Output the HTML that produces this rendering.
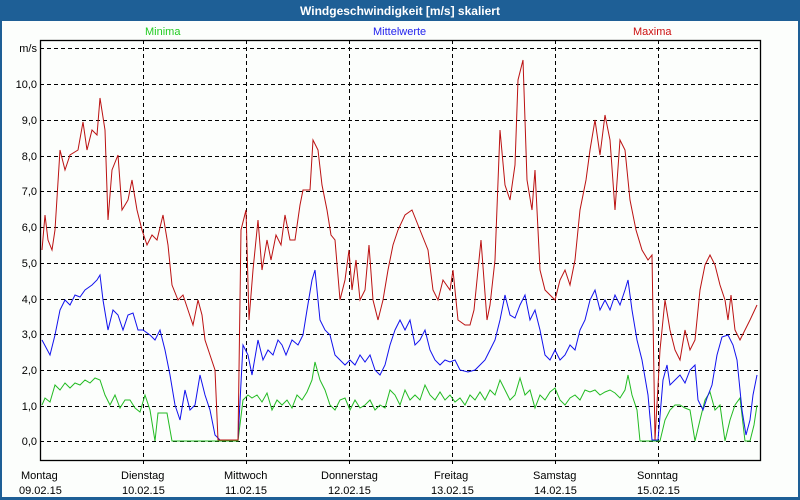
<!DOCTYPE html>
<html><head><meta charset="utf-8"><style>
body{margin:0;width:800px;height:500px;overflow:hidden;background:#fdfefd;font-family:"Liberation Sans",sans-serif;}
</style></head><body>
<svg width="800" height="500" xmlns="http://www.w3.org/2000/svg" style="display:block">
<rect x="0" y="0" width="800" height="500" fill="#1e5f96"/>
<rect x="2" y="21" width="796" height="476" fill="#fcfefc"/>
<text x="400" y="15" text-anchor="middle" font-size="12" font-weight="bold" fill="#fff" font-family="Liberation Sans, sans-serif">Windgeschwindigkeit [m/s] skaliert</text>
<g font-family="Liberation Sans, sans-serif" font-size="11">
<text x="145" y="35" fill="#22cc22">Minima</text>
<text x="373" y="35" fill="#2222ee">Mittelwerte</text>
<text x="633" y="35" fill="#cc1111">Maxima</text>
</g>
<g stroke="#000" stroke-dasharray="4,3" stroke-width="1">
<line x1="40" y1="48.5" x2="760" y2="48.5"/>
<line x1="40" y1="84.5" x2="760" y2="84.5"/>
<line x1="40" y1="120.5" x2="760" y2="120.5"/>
<line x1="40" y1="156.5" x2="760" y2="156.5"/>
<line x1="40" y1="191.5" x2="760" y2="191.5"/>
<line x1="40" y1="227.5" x2="760" y2="227.5"/>
<line x1="40" y1="263.5" x2="760" y2="263.5"/>
<line x1="40" y1="299.5" x2="760" y2="299.5"/>
<line x1="40" y1="334.5" x2="760" y2="334.5"/>
<line x1="40" y1="370.5" x2="760" y2="370.5"/>
<line x1="40" y1="406.5" x2="760" y2="406.5"/>
<line x1="40" y1="441.5" x2="760" y2="441.5"/>
<line x1="143.5" y1="40" x2="143.5" y2="466"/>
<line x1="246.5" y1="40" x2="246.5" y2="466"/>
<line x1="349.5" y1="40" x2="349.5" y2="466"/>
<line x1="452.5" y1="40" x2="452.5" y2="466"/>
<line x1="555.5" y1="40" x2="555.5" y2="466"/>
<line x1="658.5" y1="40" x2="658.5" y2="466"/>
</g>
<g font-family="Liberation Sans, sans-serif" font-size="11" fill="#000" text-anchor="end">
<text x="37" y="52">m/s</text><text x="37" y="88">10,0</text><text x="37" y="124">9,0</text>
<text x="37" y="160">8,0</text><text x="37" y="195">7,0</text><text x="37" y="231">6,0</text>
<text x="37" y="267">5,0</text><text x="37" y="303">4,0</text><text x="37" y="338">3,0</text>
<text x="37" y="374">2,0</text><text x="37" y="410">1,0</text><text x="37" y="445">0,0</text>
</g>
<g font-family="Liberation Sans, sans-serif" font-size="11" fill="#000">
<text x="21" y="479">Montag</text><text x="19" y="494">09.02.15</text>
<text x="121" y="479">Dienstag</text><text x="122" y="494">10.02.15</text>
<text x="224" y="479">Mittwoch</text><text x="225" y="494">11.02.15</text>
<text x="321" y="479">Donnerstag</text><text x="328" y="494">12.02.15</text>
<text x="434" y="479">Freitag</text><text x="431" y="494">13.02.15</text>
<text x="533" y="479">Samstag</text><text x="534" y="494">14.02.15</text>
<text x="637" y="479">Sonntag</text><text x="637" y="494">15.02.15</text>
</g>
<polyline fill="none" stroke="#22bb22" stroke-width="1" points="42,405 45,398 50,402 55,385 60,390 65,383 70,388 75,383 80,385 85,380 90,383 95,378 100,380 105,395 110,405 115,395 120,408 125,400 130,400 135,408 140,412 145,395 150,410 155,441 158,413 163,413 167,413 172,441 180,441 215,441 238,441 243,400 248,395 252,398 257,395 262,402 267,393 272,410 277,400 282,405 287,400 292,408 297,395 302,400 307,392 312,380 315,362 320,380 325,390 330,405 335,410 340,400 345,398 350,410 355,400 360,408 365,405 370,400 375,410 380,405 385,408 390,390 395,395 400,405 405,390 410,400 415,395 420,400 425,385 430,395 435,400 440,392 445,400 450,395 455,402 460,398 465,405 470,395 475,400 480,392 485,400 490,390 495,395 500,380 505,390 510,400 515,395 520,378 525,395 530,390 535,408 540,395 545,400 550,392 555,388 560,400 565,405 570,398 575,395 580,400 585,390 590,392 595,390 600,395 605,392 610,390 615,393 620,398 625,390 628,375 632,395 637,410 640,441 660,441 665,420 670,410 675,405 680,405 685,408 690,410 695,441 700,420 705,400 710,392 715,410 720,405 725,441 730,420 735,405 740,398 745,441 750,441 754,425 757,405"/>
<polyline fill="none" stroke="#1111ee" stroke-width="1" points="42,340 50,355 55,335 60,310 65,300 70,305 75,295 80,297 85,290 92,285 97,280 100,275 103,300 108,330 113,310 118,315 123,330 128,315 133,313 138,330 143,330 150,335 155,340 160,330 165,350 170,375 175,405 180,420 185,390 190,410 195,405 200,375 205,395 210,410 215,435 220,440 238,440 243,345 248,355 252,375 258,340 263,360 268,350 273,355 278,340 282,345 286,355 292,340 298,345 303,335 307,310 312,280 315,270 320,320 325,330 330,335 335,355 340,360 345,365 350,360 355,365 360,355 365,362 370,355 375,370 380,375 385,365 390,345 395,330 400,320 405,330 410,320 415,345 420,340 425,330 430,350 435,360 440,365 445,360 450,362 455,360 460,370 468,372 475,370 480,365 485,360 490,350 495,340 500,320 505,295 510,315 515,318 520,305 525,295 530,320 535,310 540,330 545,355 550,360 555,350 560,360 565,355 570,345 575,350 580,330 585,320 590,300 595,290 600,310 605,300 610,310 615,295 620,305 625,290 628,280 632,310 637,340 642,360 648,395 652,440 658,440 663,380 667,365 670,385 675,380 680,375 685,383 690,370 695,365 698,400 703,410 707,398 712,385 717,355 722,337 728,335 733,345 737,360 742,410 746,435 750,420 753,395 757,375"/>
<polyline fill="none" stroke="#bb1111" stroke-width="1" points="42,250 45,215 48,240 52,250 55,230 60,150 65,170 70,155 78,150 83,122 87,150 92,130 97,135 100,98 105,130 108,220 112,170 118,155 122,210 128,200 132,180 137,210 142,230 147,245 152,235 157,240 163,215 168,245 172,285 178,300 183,295 188,310 193,325 198,300 202,315 205,340 210,355 215,370 218,440 238,440 241,230 246,210 249,320 253,270 258,220 262,270 267,240 271,260 276,235 281,245 285,215 290,240 295,240 300,205 303,190 310,190 313,140 318,150 322,185 327,210 331,235 335,240 340,300 345,280 349,250 352,290 356,260 360,300 365,290 369,245 373,300 378,320 383,300 388,270 393,245 398,230 405,215 412,210 420,230 428,250 433,290 438,300 443,280 450,290 453,270 458,320 465,325 470,325 474,310 478,270 481,240 487,320 490,305 495,260 500,130 505,185 510,200 515,165 518,80 523,60 527,180 532,210 535,170 540,270 545,290 550,295 555,300 560,280 565,270 570,285 575,260 580,210 586,180 590,150 595,120 600,155 605,115 610,140 615,210 620,140 625,150 630,200 636,230 642,250 648,260 652,255 655,440 660,350 665,300 670,330 675,350 680,360 685,330 690,350 695,340 700,290 705,265 710,255 715,265 720,285 725,300 728,320 731,295 735,330 740,340 745,330 750,320 757,305"/>
<rect x="40.5" y="40.5" width="720" height="420" fill="none" stroke="#000" stroke-width="1.3"/>
</svg>
</body></html>
